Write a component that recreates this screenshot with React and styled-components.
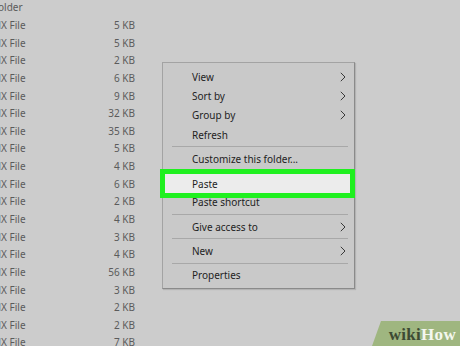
import React from "react";
import styled, { createGlobalStyle } from "styled-components";

const Global = createGlobalStyle`
  html, body { margin: 0; padding: 0; }
  body {
    width: 460px;
    height: 346px;
    overflow: hidden;
    background: #cccccc;
    font-family: "Noto Sans", "Open Sans", sans-serif;
  }
`;

const Page = styled.div`
  position: relative;
  width: 460px;
  height: 346px;
  overflow: hidden;
  background: #cccccc;
`;

const FileList = styled.div`
  display: grid;
  grid-template-columns: 100px 35px;
  grid-auto-rows: 17.65px;
  margin-top: -1.5px;
  font-size: 10px;
  color: #5b5b5b;
`;

const TypeCell = styled.div`
  display: flex;
  align-items: center;
  white-space: nowrap;
  margin-left: ${(p) => p.$shift}px;
`;

const SizeCell = styled.div`
  display: flex;
  align-items: center;
  justify-content: flex-end;
  white-space: nowrap;
`;

const Menu = styled.div`
  position: absolute;
  left: 162px;
  top: 62px;
  width: 193px;
  box-sizing: border-box;
  padding: 4px 0 3px;
  background: #c9c9c9;
  border: 1px solid #a3a3a3;
  border-right-color: #8a8a8a;
  border-bottom-color: #8a8a8a;
  box-shadow: 1px 1px 1px rgba(0, 0, 0, 0.12);
  display: flex;
  flex-direction: column;
  font-size: 10px;
  color: #1e1e1e;
`;

const Item = styled.div`
  height: 19.3px;
  display: flex;
  align-items: center;
  justify-content: space-between;
  padding: 0 8px 0 29px;
  background: ${(p) => (p.$active ? "#ededed" : "transparent")};
  white-space: nowrap;
`;

const Sep = styled.div`
  height: 1px;
  margin: 2px 6px 2px 9px;
  background: #a8a8a8;
`;

const Arrow = styled.svg`
  width: 6px;
  height: 10px;
  flex: none;
`;

const Highlight = styled.div`
  position: absolute;
  left: 160px;
  top: 169px;
  width: 195px;
  height: 29px;
  box-sizing: border-box;
  border: 5px solid #1ff01f;
  display: flex;
  align-items: center;
  padding-left: 27px;
  background: #ececec;
  font-size: 10px;
  color: #1e1e1e;
`;

const Badge = styled.div`
  position: absolute;
  right: 0;
  bottom: 0;
  width: 88px;
  height: 25px;
  background: #9fb680;
  clip-path: polygon(9px 0, 100% 0, 100% 100%, 0 100%);
  display: flex;
  align-items: center;
  justify-content: flex-end;
  padding: 2px 4px 0 0;
  box-sizing: border-box;
  font-family: "Liberation Serif", "DejaVu Serif", serif;
  font-weight: bold;
  font-size: 17px;
  letter-spacing: 0.3px;
`;

const Wiki = styled.span`
  color: #3d4a33;
`;

const How = styled.span`
  color: #f4f7ef;
`;

const sizes = [5, 5, 2, 6, 9, 32, 35, 5, 4, 6, 2, 4, 3, 4, 56, 3, 2, 2, 7];

const ChevronRight = () => (
  <Arrow viewBox="0 0 6 10">
    <path d="M0.8 0.8 L5 5 L0.8 9.2" fill="none" stroke="#3a3a3a" strokeWidth="1" />
  </Arrow>
);

const menuTop = [
  { label: "View", sub: true },
  { label: "Sort by", sub: true },
  { label: "Group by", sub: true },
  { label: "Refresh" },
];

export default function App() {
  return (
    <>
      <Global />
      <Page>
        <FileList>
          <TypeCell $shift={-24}>File folder</TypeCell>
          <SizeCell />
          {sizes.map((s, i) => (
            <React.Fragment key={i}>
              <TypeCell $shift={-8}>MX File</TypeCell>
              <SizeCell>{s} KB</SizeCell>
            </React.Fragment>
          ))}
        </FileList>

        <Menu>
          {menuTop.map((m) => (
            <Item key={m.label}>
              <span>{m.label}</span>
              {m.sub && <ChevronRight />}
            </Item>
          ))}
          <Sep />
          <Item>Customize this folder...</Item>
          <Sep />
          <Item $active>Paste</Item>
          <Item>Paste shortcut</Item>
          <Sep />
          <Item>
            <span>Give access to</span>
            <ChevronRight />
          </Item>
          <Sep />
          <Item>
            <span>New</span>
            <ChevronRight />
          </Item>
          <Sep />
          <Item>Properties</Item>
        </Menu>

        <Highlight>Paste</Highlight>

        <Badge>
          <Wiki>wiki</Wiki>
          <How>How</How>
        </Badge>
      </Page>
    </>
  );
}
